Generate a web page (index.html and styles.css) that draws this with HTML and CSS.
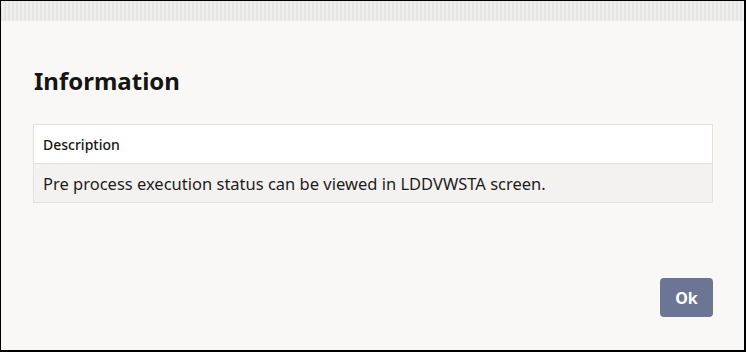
FILE: index.html
```html
<!DOCTYPE html>
<html>
<head>
    <title>Information</title>
    <link rel="stylesheet" href="styles.css">
</head>
<body>
    <div class="frame">
        <div class="topStrip"></div>
        <div class="dialog">
            <h1 class="title">Information</h1>
            <table class="infoTable">
                <thead>
                    <tr><th>Description</th></tr>
                </thead>
                <tbody>
                    <tr><td>Pre process execution status can be viewed in LDDVWSTA screen.</td></tr>
                </tbody>
            </table>
            <div class="footer">
                <button class="okButton">Ok</button>
            </div>
        </div>
    </div>
</body>
</html>
```

FILE: styles.css
```css
html, body {
    margin: 0;
    padding: 0;
}
body {
    width: 746px;
    height: 352px;
    font-family: "Noto Sans", "Open Sans", sans-serif;
    color: #161513;
}
.frame {
    box-sizing: border-box;
    width: 746px;
    height: 352px;
    border-top: 1px solid #000;
    border-left: 1px solid #000;
    border-right: 2px solid #000;
    border-bottom: 2px solid #000;
    background-color: #f9f8f6;
    display: flex;
    flex-direction: column;
}
.topStrip {
    height: 20px;
    background-color: #e9e9e8;
    background-image: repeating-linear-gradient(90deg, #e4e4e3 0 1px, #efefee 1px 3px, #e6e6e5 3px 4px);
}
.dialog {
    flex: 1;
    padding: 0 32px 0 32px;
    display: flex;
    flex-direction: column;
}
.title {
    margin: 44px 0 0 1px;
    font-size: 24px;
    font-weight: 700;
    line-height: 32px;
    height: 37px;
}
.infoTable {
    margin-top: 22px;
    border-collapse: collapse;
    width: 680px;
}
.infoTable th, .infoTable td {
    border: 1px solid #e3e1de;
    text-align: left;
    padding: 0 9px;
    height: 38px;
}
.infoTable th {
    background-color: #ffffff;
    font-size: 14px;
    font-weight: 500;
}
.infoTable td {
    background-color: #f3f2f0;
    font-size: 16.5px;
    font-weight: 400;
    color: #1e1d1b;
}
.footer {
    display: flex;
    justify-content: flex-end;
    margin-top: 75px;
    margin-right: -1px;
}
.okButton {
    width: 53px;
    height: 39px;
    border: none;
    border-radius: 4px;
    background-color: #6c7594;
    color: #ffffff;
    font-family: "Noto Sans", "Open Sans", sans-serif;
    font-size: 16px;
    font-weight: 700;
    padding: 0;
}
```
